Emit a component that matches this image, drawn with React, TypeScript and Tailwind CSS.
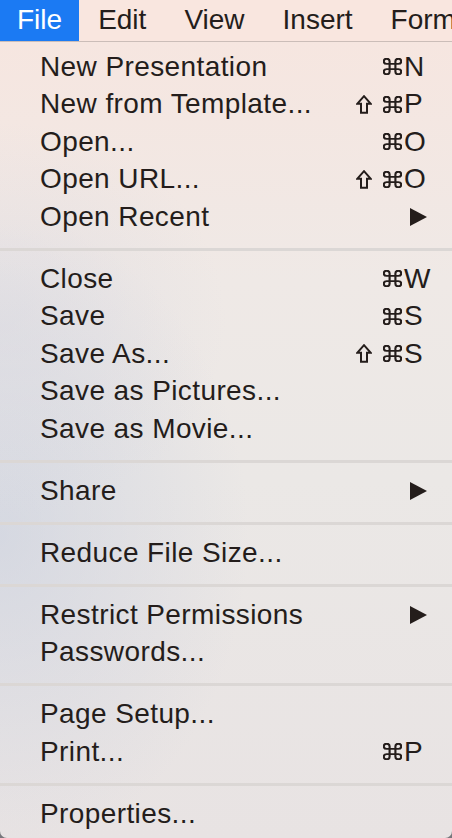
import React from "react";

type Item = { label: string; shift?: boolean; keyName?: string; sub?: boolean };

const groups: Item[][] = [
  [
    { label: "New Presentation", keyName: "N" },
    { label: "New from Template...", shift: true, keyName: "P" },
    { label: "Open...", keyName: "O" },
    { label: "Open URL...", shift: true, keyName: "O" },
    { label: "Open Recent", sub: true },
  ],
  [
    { label: "Close", keyName: "W" },
    { label: "Save", keyName: "S" },
    { label: "Save As...", shift: true, keyName: "S" },
    { label: "Save as Pictures..." },
    { label: "Save as Movie..." },
  ],
  [{ label: "Share", sub: true }],
  [{ label: "Reduce File Size..." }],
  [{ label: "Restrict Permissions", sub: true }, { label: "Passwords..." }],
  [{ label: "Page Setup..." }, { label: "Print...", keyName: "P" }],
  [{ label: "Properties..." }],
];

const menus = ["Edit", "View", "Insert", "Format"];

function SubArrow() {
  return (
    <svg width="17" height="18" viewBox="0 0 17 18" className="mr-[9px]">
      <polygon points="0,0 17,9 0,18" fill="#241d1b" />
    </svg>
  );
}

function ShiftGlyph() {
  return (
    <svg width="16" height="19" viewBox="0 0 16 19" className="mr-[11px]">
      <polygon
        points="8,1.2 14.8,8.8 11,8.8 11,17.8 5,17.8 5,8.8 1.2,8.8"
        fill="none"
        stroke="#241d1b"
        strokeWidth="2"
        strokeLinejoin="miter"
      />
    </svg>
  );
}

function CmdGlyph() {
  return (
    <svg width="19" height="17" viewBox="2.2 2.2 19.6 19.6" preserveAspectRatio="none">
      <path
        d="M15 6v12a3 3 0 1 0 3-3H6a3 3 0 1 0 3 3V6a3 3 0 1 0-3 3h12a3 3 0 1 0-3-3"
        fill="none"
        stroke="#241d1b"
        strokeWidth="2.2"
      />
    </svg>
  );
}

function Row({ item }: { item: Item }) {
  return (
    <div className="flex h-[37.5px] items-center pl-[40px] pr-[16px]">
      <span className="flex-1 whitespace-nowrap text-[28px] leading-none tracking-[0.4px]">{item.label}</span>
      {item.sub && <SubArrow />}
      {item.keyName && (
        <div className="flex items-center">
          {item.shift && <ShiftGlyph />}
          <CmdGlyph />
          <span className="ml-[2px] w-[32px] text-[28px] leading-none">{item.keyName}</span>
        </div>
      )}
    </div>
  );
}

export default function App() {
  return (
    <div className="h-[838px] w-[452px] overflow-hidden bg-[#77777c] font-['Liberation_Sans',Arial,sans-serif] text-[#241d1b]">
      {/* menu bar */}
      <div className="flex h-[42px] border-b border-[#cbbdb8] bg-[#f9e6df] text-[28px]">
        <div className="flex items-center bg-[#1b7af3] px-[17px] pb-[2px] text-white">File</div>
        {menus.map((m) => (
          <div key={m} className="flex items-center whitespace-nowrap px-[19px] pb-[2px]">
            {m}
          </div>
        ))}
      </div>

      {/* dropdown */}
      <div className="relative h-[796px] overflow-hidden rounded-b-[7px] bg-[linear-gradient(180deg,#f6e6e0_0%,#efe9e6_30%,#ebe8e6_55%,#e8e3e3_100%)] pt-[6px]">
        <div className="pointer-events-none absolute inset-0 bg-[radial-gradient(ellipse_55%_40%_at_0%_62%,rgba(196,204,222,0.55),transparent)]" />
        <div className="pointer-events-none absolute inset-0 bg-[radial-gradient(ellipse_50%_25%_at_0%_35%,rgba(210,212,224,0.4),transparent)]" />
        <div className="relative">
          {groups.map((g, gi) => (
            <div key={gi}>
              {gi > 0 && <div className="mb-[9.25px] mt-[12.25px] h-[3px] bg-[#dbd7d5]" />}
              {g.map((it) => (
                <Row key={it.label} item={it} />
              ))}
            </div>
          ))}
        </div>
      </div>
    </div>
  );
}
